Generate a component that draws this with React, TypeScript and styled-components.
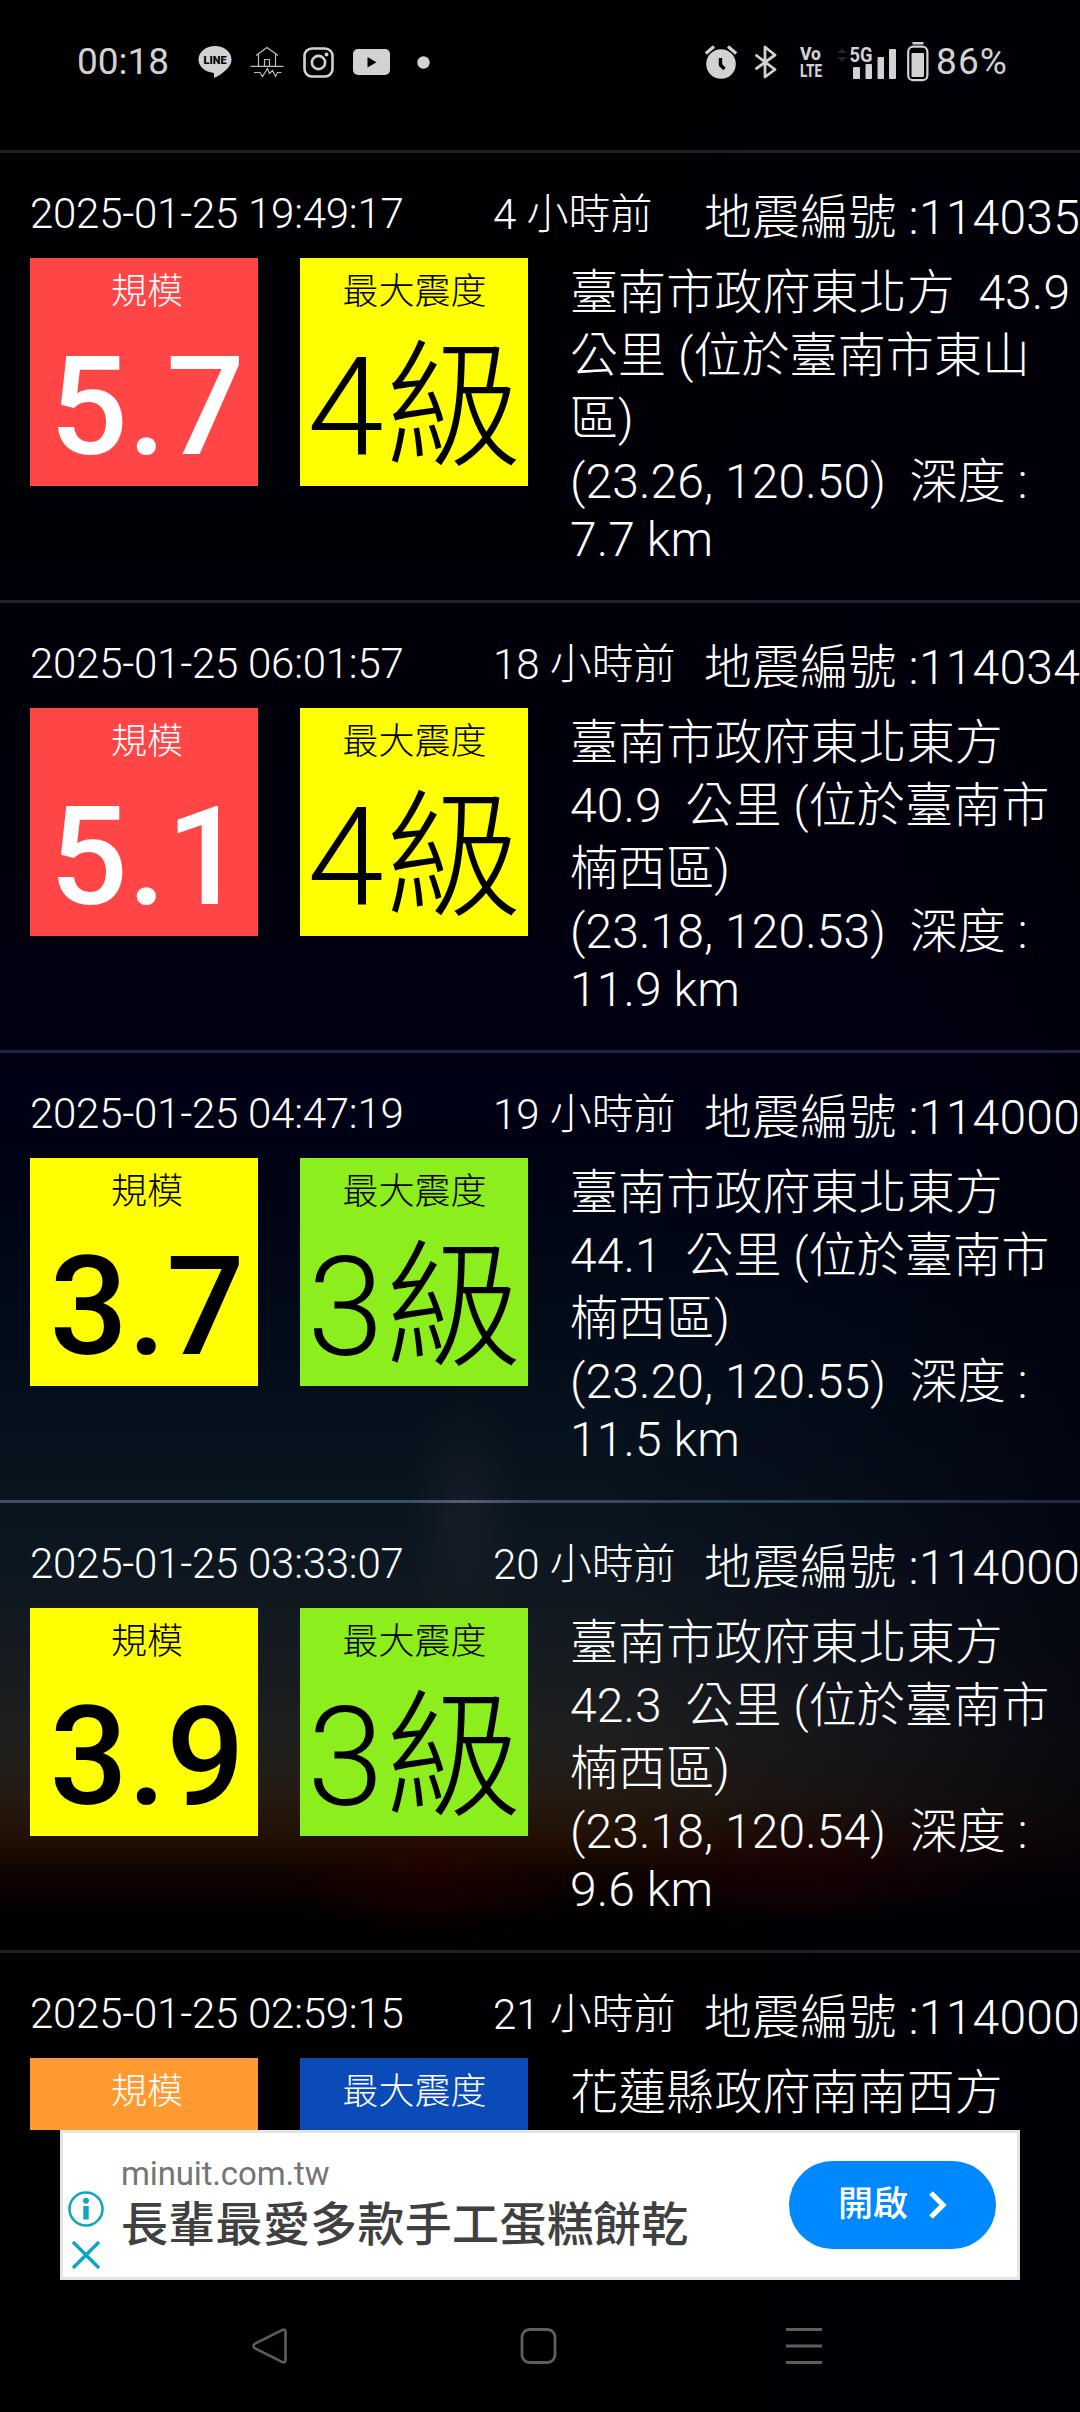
import React from 'react';
import styled, { createGlobalStyle } from 'styled-components';

const Global = createGlobalStyle`
  * { box-sizing: border-box; }
  body { margin: 0; background: #000; }
`;

const Screen = styled.div`
  width: 1080px;
  height: 2412px;
  display: flex;
  flex-direction: column;
  overflow: hidden;
  color: #fff;
  font-family: Roboto, 'Noto Sans CJK TC', sans-serif;
  background:
    radial-gradient(ellipse 60px 130px at 465px 1510px, rgba(50, 45, 55, 0.3), transparent),
    radial-gradient(ellipse 150px 75px at 430px 1875px, rgba(45, 0, 0, 0.45), transparent),
    radial-gradient(ellipse 190px 60px at 800px 1870px, rgba(40, 0, 0, 0.45), transparent),
    linear-gradient(to right, transparent 55%, rgba(0, 0, 16, 0.35) 80%, rgba(0, 0, 10, 0.7) 100%),
    linear-gradient(to bottom, #000 0, #000004 300px, #000008 600px, #00000e 900px, #000014 1080px,
      #000615 1230px, #05111c 1420px, #0b1620 1540px, #161b20 1660px, #1f1f1e 1740px,
      #241b12 1795px, #220f03 1840px, #0e0300 1875px, #000 1920px);
`;

const StatusBar = styled.header`
  height: 150px;
  flex: none;
  display: flex;
  justify-content: space-between;
  padding: 38px 72px 0 77px;
`;

const StatusGroup = styled.div`
  display: flex;
  align-items: center;
  height: 48px;
`;

const StatusText = styled.span<{ $spacing?: string; $gap?: number }>`
  margin-left: ${(p) => p.$gap ?? 0}px;
  font-size: 37px;
  line-height: 48px;
  color: #d2d2d2;
  letter-spacing: ${(p) => p.$spacing ?? '0'};
`;

const Glyph = styled.svg<{ $gap?: number }>`
  display: block;
  flex: none;
  overflow: visible;
  margin-left: ${(p) => p.$gap ?? 0}px;
  font-family: Roboto, sans-serif;
`;

const List = styled.main`
  height: 1980px;
  flex: none;
  overflow: hidden;
`;

const Row = styled.article`
  height: 450px;
  display: flex;
  flex-direction: column;
`;

const Divider = styled.div<{ $line: string }>`
  height: 3px;
  flex: none;
  background: ${(p) => p.$line};
`;

const RowHead = styled.div`
  display: flex;
  height: 105px;
  flex: none;
  padding: 33px 0 0 30px;
  white-space: nowrap;
  font-weight: 300;
`;

const Stamp = styled.time`
  width: 463px;
  font-size: 42px;
  line-height: 56px;
  letter-spacing: -0.24px;
`;

const Ago = styled.span`
  width: 211px;
  font-size: 42px;
  line-height: 57px;
`;

const Serial = styled.span`
  font-size: 48px;
  line-height: 64px;
  letter-spacing: 0.22px;
`;

const RowBody = styled.div`
  display: flex;
  padding-left: 30px;
`;

const Tile = styled.section<{ $bg: string; $fg: string; $inset: number }>`
  width: 228px;
  height: 228px;
  margin-right: 42px;
  padding-left: ${(p) => p.$inset}px;
  flex: none;
  display: flex;
  flex-direction: column;
  align-items: center;
  background: ${(p) => p.$bg};
  color: ${(p) => p.$fg};
`;

const TileLabel = styled.span`
  font-size: 36px;
  line-height: 48px;
  padding-top: 10px;
  font-weight: 200;
`;

const TileValue = styled.span<{ $bold?: boolean }>`
  font-size: 138px;
  line-height: 162px;
  margin-top: ${(p) => (p.$bold ? 10 : 11)}px;
  white-space: nowrap;
  font-weight: ${(p) => (p.$bold ? 500 : 300)};
`;

const Place = styled.div`
  padding-top: 3px;
  font-size: 48px;
  font-weight: 300;
  letter-spacing: 0.1px;
`;

const PlaceLine = styled.div<{ $latin?: boolean }>`
  line-height: ${(p) => (p.$latin ? 53 : 63)}px;
  white-space: pre;
`;

const Ad = styled.aside`
  width: 960px;
  height: 150px;
  flex: none;
  margin: 0 auto;
  display: flex;
  border: 3px solid #e4e4e4;
  background: #fff;
`;

const AdMarks = styled.div`
  width: 58px;
  display: flex;
  flex-direction: column;
  padding: 57px 0 0 4px;
  gap: 12px;
`;

const AdCopy = styled.div`
  flex: 1;
  display: flex;
  flex-direction: column;
`;

const AdSite = styled.span`
  margin-top: 20px;
  font-size: 33px;
  line-height: 42px;
  letter-spacing: -0.15px;
  color: #757575;
`;

const AdTitle = styled.span`
  margin-top: 2px;
  font-size: 47px;
  line-height: 56px;
  letter-spacing: 0.3px;
  font-weight: 500;
  color: #404040;
  white-space: nowrap;
`;

const AdButton = styled.button`
  width: 207px;
  height: 88px;
  margin: 28px 21px 0 0;
  padding: 0 0 1px 1px;
  display: flex;
  align-items: center;
  justify-content: center;
  gap: 20px;
  border: 0;
  border-radius: 44px;
  background: #08f;
  color: #fff;
  font: 500 35px/44px Roboto, 'Noto Sans CJK TC', sans-serif;
`;

const NavBar = styled.nav`
  height: 132px;
  flex: none;
  display: flex;
  padding: 46px 256px 0 250px;
  justify-content: space-between;
`;

type Quake = {
  line: string;
  time: string;
  ago: string;
  serial: string;
  magnitude: string;
  magBg: string;
  magFg: string;
  level: string;
  lvlBg: string;
  lvlFg: string;
  place: string[];
  depth: string;
};

const RED = '#ff4545';
const YELLOW = '#ffff00';
const GREEN = '#8cee1c';

const quakes: Quake[] = [
  {
    line: '#202022', time: '2025-01-25 19:49:17', ago: '4 小時前', serial: '114035',
    magnitude: '5.7', magBg: RED, magFg: '#fff', level: '4級', lvlBg: YELLOW, lvlFg: '#000',
    place: ['臺南市政府東北方  43.9', '公里 (位於臺南市東山', '區)', '(23.26, 120.50)  深度 :'], depth: '7.7 km',
  },
  {
    line: '#21212e', time: '2025-01-25 06:01:57', ago: '18 小時前', serial: '114034',
    magnitude: '5.1', magBg: RED, magFg: '#fff', level: '4級', lvlBg: YELLOW, lvlFg: '#000',
    place: ['臺南市政府東北東方', '40.9  公里 (位於臺南市', '楠西區)', '(23.18, 120.53)  深度 :'], depth: '11.9 km',
  },
  {
    line: '#22224c', time: '2025-01-25 04:47:19', ago: '19 小時前', serial: '114000',
    magnitude: '3.7', magBg: YELLOW, magFg: '#000', level: '3級', lvlBg: GREEN, lvlFg: '#000',
    place: ['臺南市政府東北東方', '44.1  公里 (位於臺南市', '楠西區)', '(23.20, 120.55)  深度 :'], depth: '11.5 km',
  },
  {
    line: 'linear-gradient(to right, #3c4f66, #3a506a 38%, #4e5f72 43%, #364a68 50%, #283c5c 80%, #222448)',
    time: '2025-01-25 03:33:07', ago: '20 小時前', serial: '114000',
    magnitude: '3.9', magBg: YELLOW, magFg: '#000', level: '3級', lvlBg: GREEN, lvlFg: '#000',
    place: ['臺南市政府東北東方', '42.3  公里 (位於臺南市', '楠西區)', '(23.18, 120.54)  深度 :'], depth: '9.6 km',
  },
  {
    line: '#202020', time: '2025-01-25 02:59:15', ago: '21 小時前', serial: '114000',
    magnitude: '', magBg: '#ff9a30', magFg: '#fff', level: '', lvlBg: '#0b4bb8', lvlFg: '#fff',
    place: ['花蓮縣政府南南西方'], depth: '',
  },
];

const LIGHT = '#d2d2d2';

function StatusLeft() {
  return (
    <StatusGroup>
      <StatusText>00:18</StatusText>
      <Glyph $gap={29} width="34" height="34" viewBox="0 0 34 34">
        <path fill={LIGHT} d="M17 1C7.800 1 .5 7 .5 14.500c0 6.700 6 12.200 14 13.200 1.800.3 1.700 1.200 1.400 3-.2 1.300-.2 2.300 1 1.900 3.500-1.500 9.800-5.800 13.200-9.900 2.200-2.400 3.400-5.200 3.400-8.200C33.500 7 26.200 1 17 1z" />
        <text x="17" y="18.700" fontSize="11" fontWeight="900" textAnchor="middle" textLength="23" lengthAdjust="spacingAndGlyphs" fill="#000">LINE</text>
      </Glyph>
      <Glyph $gap={18} width="34" height="32" viewBox="0 0 34 32" fill="none" stroke="#bdbdbd" strokeWidth="1.200">
        <path d="M6 9.500 17 1.500 28 9.500M8.500 8v12M25.500 8v12M14.500 20v-6.500h5V20" />
        <path d="M.5 20.300h33" />
        <path d="M4 26.500h6l2.500 4 5-8 2 5 3-3 3 6 2-4h4" />
      </Glyph>
      <Glyph $gap={19} width="31" height="31" viewBox="0 0 31 31" fill="none" stroke={LIGHT}>
        <rect x="1.500" y="1.500" width="28" height="28" rx="7.500" strokeWidth="2.600" />
        <circle cx="15.500" cy="15.500" r="6.600" strokeWidth="2.600" />
        <circle cx="23.500" cy="7.500" r="1.900" fill={LIGHT} stroke="none" />
      </Glyph>
      <Glyph $gap={19} width="37" height="26" viewBox="0 0 37 26">
        <rect width="37" height="26" rx="5" fill={LIGHT} />
        <path d="M14.500 8v10.500l9-5.250z" fill="#000" />
      </Glyph>
      <Glyph $gap={27} width="13" height="13" viewBox="0 0 13 13">
        <circle cx="6.500" cy="6.500" r="6.200" fill={LIGHT} />
      </Glyph>
    </StatusGroup>
  );
}

function StatusRight() {
  return (
    <StatusGroup>
      <Glyph width="32" height="34" viewBox="0 0 32 34">
        <circle cx="16" cy="19" r="14.800" fill={LIGHT} />
        <path d="M.8 8.500 9 1.500M31.200 8.500 23 1.500" stroke={LIGHT} strokeWidth="3.200" />
        <path d="M15.500 13v7l4 4" stroke="#000" strokeWidth="3.400" fill="none" />
      </Glyph>
      <Glyph $gap={18} width="22" height="34" viewBox="0 0 22 34" fill="none" stroke={LIGHT} strokeWidth="2.800" strokeLinejoin="round" strokeLinecap="round">
        <path d="M1.500 10.500 20 24.500 10 32V2l10 8L1.500 23.500" />
      </Glyph>
      <Glyph $gap={22} width="24" height="32" viewBox="0 0 24 32" fill={LIGHT} fontWeight="800">
        <text x="1" y="14" fontSize="18" textLength="21" lengthAdjust="spacingAndGlyphs">Vo</text>
        <text x="1" y="31" fontSize="19" textLength="22" lengthAdjust="spacingAndGlyphs">LTE</text>
      </Glyph>
      <Glyph $gap={14} width="61" height="36" viewBox="0 0 61 36" fill={LIGHT}>
        <path d="M0 9l5-5 5 5zM0 13h10l-5 5z" fill="#222" />
        <text x="12.500" y="18" fontSize="21" fontWeight="700" textLength="23" lengthAdjust="spacingAndGlyphs">5G</text>
        <rect x="16" y="23" width="7" height="12" rx="1" />
        <rect x="28.500" y="20" width="6.500" height="15" rx="1" />
        <rect x="40.500" y="13" width="6.500" height="22" rx="1" />
        <rect x="52" y="5" width="7" height="30" rx="1" />
      </Glyph>
      <Glyph $gap={9} width="22" height="40" viewBox="0 0 22 40" fill={LIGHT}>
        <rect x="5.500" y="0" width="11" height="2.500" />
        <rect x="1.200" y="4.700" width="19.200" height="33.500" rx="5" fill="none" stroke={LIGHT} strokeWidth="2.200" />
        <rect x="4.500" y="11" width="12.500" height="24" rx="1" />
      </Glyph>
      <StatusText $gap={7} $spacing="1.1px">86%</StatusText>
    </StatusGroup>
  );
}

export default function App() {
  return (
    <Screen>
      <Global />
      <StatusBar>
        <StatusLeft />
        <StatusRight />
      </StatusBar>
      <List>
        {quakes.map((q) => (
          <Row key={q.time}>
            <Divider $line={q.line} />
            <RowHead>
              <Stamp>{q.time}</Stamp>
              <Ago>{q.ago}</Ago>
              <Serial>地震編號 :{q.serial}</Serial>
            </RowHead>
            <RowBody>
              <Tile $bg={q.magBg} $fg={q.magFg} $inset={6}>
                <TileLabel>規模</TileLabel>
                <TileValue $bold>{q.magnitude}</TileValue>
              </Tile>
              <Tile $bg={q.lvlBg} $fg={q.lvlFg} $inset={1}>
                <TileLabel>最大震度</TileLabel>
                <TileValue>{q.level}</TileValue>
              </Tile>
              <Place>
                {q.place.map((line) => (
                  <PlaceLine key={line}>{line}</PlaceLine>
                ))}
                <PlaceLine $latin>{q.depth}</PlaceLine>
              </Place>
            </RowBody>
          </Row>
        ))}
      </List>
      <Ad>
        <AdMarks>
          <Glyph width="38" height="38" viewBox="0 0 38 38">
            <circle cx="19" cy="19" r="16.500" fill="none" stroke="#12a5bd" strokeWidth="2.600" />
            <circle cx="19" cy="10.800" r="3" fill="#12a5bd" />
            <rect x="16.300" y="16" width="5.400" height="13.500" fill="#12a5bd" />
          </Glyph>
          <Glyph $gap={4} width="30" height="30" viewBox="0 0 30 30" stroke="#12a5bd" strokeWidth="3.600">
            <path d="M2 2l26 26M28 2 2 28" />
          </Glyph>
        </AdMarks>
        <AdCopy>
          <AdSite>minuit.com.tw</AdSite>
          <AdTitle>長輩最愛多款手工蛋糕餅乾</AdTitle>
        </AdCopy>
        <AdButton>
          開啟
          <Glyph width="20" height="30" viewBox="0 0 20 30" fill="none" stroke="#fff" strokeWidth="5.200">
            <path d="M3 3l12 12L3 27" />
          </Glyph>
        </AdButton>
      </Ad>
      <NavBar>
        <Glyph width="38" height="40" viewBox="0 0 38 40" fill="none" stroke="#5e5e5e" strokeWidth="2.600">
          <path d="M32.500 3.800 5 17.700c-2 1-2 3.600 0 4.600l27.500 13.900c1.600.8 3-.2 3-2V5.800c0-1.800-1.400-2.800-3-2z" />
        </Glyph>
        <Glyph width="38" height="40" viewBox="0 0 38 40" fill="none" stroke="#5e5e5e" strokeWidth="2.800">
          <rect x="4" y="3.500" width="33" height="33" rx="7.500" />
        </Glyph>
        <Glyph width="38" height="40" viewBox="0 0 38 40" stroke="#5e5e5e" strokeWidth="3">
          <path d="M0 3.500h36M0 20h36M0 36.500h36" />
        </Glyph>
      </NavBar>
    </Screen>
  );
}
